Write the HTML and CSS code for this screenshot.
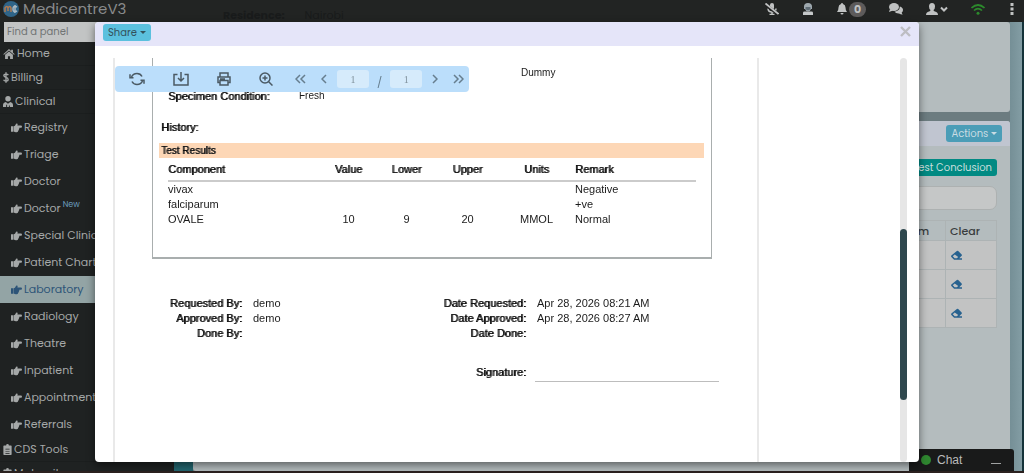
FILE: index.html
```
<!DOCTYPE html>
<html lang="en">
<head>
  <meta charset="UTF-8">
  <meta name="viewport" content="width=device-width, initial-scale=1.0">
  <title>MedicentreV3</title>
  <link rel="stylesheet" href="styles.css">
</head>
<body>
  <!-- Shared icons -->
  <svg class="sprite" aria-hidden="true">
    <symbol id="hand" viewBox="0 0 16 14">
      <path d="M0 4.500h3.400V12.500H0zM4 4.500Q6 4 7 1.500q.500-1.500 2-1 1.300 1 .300 3H14.500q1.500 0 1.500 1.600t-1.500 1.600H12q.600 1.200-.500 2.200.3 1.500-1 2 0 2.100-2 2.100H7q-1.500 0-3-1z"/>
    </symbol>
    <symbol id="clipboard" viewBox="0 0 12 16">
      <path fill-rule="evenodd" d="M1 2h3a2 2 0 0 1 4 0h3a1 1 0 0 1 1 1v12a1 1 0 0 1-1 1H1a1 1 0 0 1-1-1V3a1 1 0 0 1 1-1zM3 7v1h6V7zM3 10v1h6v-1zM3 13v1h6v-1z"/>
    </symbol>
    <symbol id="eraser" viewBox="0 0 18 16">
      <path fill-rule="evenodd" d="M9.500 1.500a1.500 1.500 0 0 1 2 0l5 5a1.500 1.500 0 0 1 0 2L13 12h4v2H5.500L1.500 10a1.500 1.500 0 0 1 0-2zM6.500 6.500L3.500 9.200 6.300 12h3.200L11.500 10z"/>
    </symbol>
  </svg>

  <header class="topbar">
    <div class="brand">
      <svg class="logo" viewBox="0 0 16 16">
        <circle cx="8" cy="8" r="8" fill="#2f6488"/>
        <path d="M2 11V7q2-3 3 0v3M5 7q2-3 3 0v4" fill="none" stroke="#b07a50" stroke-width="1.500"/>
        <path d="M14 6q-4-2-4 2t4 2M12 4v8" fill="none" stroke="#a9b8c2" stroke-width="1.500"/>
      </svg>
      <span>MedicentreV3</span>
    </div>
    <div class="residence"><b>Residence:</b><span>Nairobi</span></div>
    <nav class="tools">
      <button class="tool" aria-label="Microphone off">
        <svg width="14" height="12" viewBox="0 0 14 12"><rect x="5" y="0" width="4" height="7" rx="2" fill="currentColor"/><path d="M3 5.500q0 3.500 4 3.500t4-3.500M7 9v2.500M4.500 11.500h5" fill="none" stroke="currentColor" stroke-width="1.500"/><path d="M0 1.500L13 11" stroke="#222" stroke-width="3"/><path d="M.5.500L13.500 11" stroke="currentColor" stroke-width="1.800"/></svg>
      </button>
      <button class="tool" aria-label="Operator">
        <svg width="12" height="12" viewBox="0 0 12 12"><path d="M2 3.500a4 3.500 0 0 1 8 0V6H9Q8 8.500 6 8.500T3 6H2z" fill="#9ea8ae"/><path d="M3.500 4h5v2Q6 8.500 3.500 6z" fill="#5e6b74"/><path d="M1 12V9.500q0-1 1.500-1h7q1.500 0 1.500 1V12z" fill="#c5c8c9"/></svg>
      </button>
      <button class="tool" aria-label="Notifications">
        <svg width="10" height="12" viewBox="0 0 10 12"><path d="M5 0q1 0 1 1 2.500.7 2.500 3.500 0 3 1.500 4.500H0q1.500-1.500 1.500-4.500Q1.500 1.700 4 1q0-1 1-1zM3.500 10h3a1.500 1.500 0 0 1-3 0z" fill="currentColor"/></svg>
        <span class="badge">0</span>
      </button>
      <button class="tool" aria-label="Messages">
        <svg width="14" height="12" viewBox="0 0 14 12"><ellipse cx="5" cy="4" rx="5" ry="4" fill="currentColor"/><path d="M1 6L0 9l4-1.500z" fill="currentColor"/><path d="M10.800 3.500q0 4.500-5.300 5.200 1.500 2 4.500 1.800 2 1.300 3.700 1-1-1-1-2 1.300-1 1.300-2.500 0-2.500-3.200-3.500z" fill="currentColor"/></svg>
      </button>
      <button class="tool" aria-label="Account">
        <svg width="22" height="12" viewBox="0 0 22 12"><path d="M6 0q3 0 3 3.500Q9 6 7.500 7q0 1.200 1.500 1.500 3 .8 3 3.500H0q0-2.700 3-3.500Q4.500 8.200 4.500 7 3 6 3 3.500 3 0 6 0z" fill="currentColor"/><path d="M15 4.500l3 3 3-3" fill="none" stroke="currentColor" stroke-width="2"/></svg>
      </button>
      <button class="tool online" aria-label="Connection">
        <svg width="14" height="11" viewBox="0 0 14 11"><path d="M.5 4q6.500-6 13 0M3 6.500q4-3.700 8 0" fill="none" stroke="currentColor" stroke-width="1.700"/><circle cx="7" cy="9.200" r="1.500" fill="currentColor"/></svg>
      </button>
      <button class="tool" aria-label="More">
        <svg width="8" height="12" viewBox="-2 0 8 12"><path d="M.5 0h3v3h-3zM.5 4.500h3v3h-3zM.5 9h3v3h-3z" fill="currentColor"/></svg>
      </button>
    </nav>
  </header>

  <div class="layout">
    <aside class="sidebar">
      <input class="search" type="text" placeholder="Find a panel" aria-label="Find a panel">
      <ul class="menu">
        <li><a href="#"><svg width="12" height="10" viewBox="0 0 16 14"><path d="M8 0l3 2.700V1h2.500v4L16 7.200l-1 1L8 2.200l-7 6-1-1zM8 3.500l5.500 4.700V14H9.500v-4h-3v4h-4V8.200z"/></svg>Home</a></li>
        <li><a href="#"><svg width="6" height="11" viewBox="0 0 7 12"><path d="M6.200 3.200Q5.500 2 3.500 2 1 2 1 3.800q0 1.500 2.500 2T6 8.200Q6 10 3.500 10 1.300 10 .7 8.500M3.500 0v12" fill="none" stroke="currentColor" stroke-width="1.600"/></svg>Billing</a></li>
        <li><a href="#"><svg width="10" height="11" viewBox="0 0 11 12"><circle cx="5.500" cy="3" r="3"/><path d="M0 12V9.500Q0 7 3 6.500l2.500 2 2.500-2q3 .5 3 3V12H7.500v-1.500h-1V12h-2V9.500h-1V12z"/></svg>Clinical</a></li>
      </ul>
      <ul class="menu submenu">
        <li><a href="#"><svg><use href="#hand"/></svg>Registry</a></li>
        <li><a href="#"><svg><use href="#hand"/></svg>Triage</a></li>
        <li><a href="#"><svg><use href="#hand"/></svg>Doctor</a></li>
        <li><a href="#"><svg><use href="#hand"/></svg>Doctor <sup>New</sup></a></li>
        <li><a href="#"><svg><use href="#hand"/></svg>Special Clinics</a></li>
        <li><a href="#"><svg><use href="#hand"/></svg>Patient Charts</a></li>
        <li class="active"><a href="#"><svg><use href="#hand"/></svg>Laboratory</a></li>
        <li><a href="#"><svg><use href="#hand"/></svg>Radiology</a></li>
        <li><a href="#"><svg><use href="#hand"/></svg>Theatre</a></li>
        <li><a href="#"><svg><use href="#hand"/></svg>Inpatient</a></li>
        <li><a href="#"><svg><use href="#hand"/></svg>Appointments</a></li>
        <li><a href="#"><svg><use href="#hand"/></svg>Referrals</a></li>
      </ul>
      <ul class="menu">
        <li><a href="#"><svg width="9" height="11"><use href="#clipboard"/></svg>CDS Tools</a></li>
        <li><a href="#"><svg width="9" height="11"><use href="#clipboard"/></svg>Maternity<svg class="arrow" width="8" height="6" viewBox="0 0 8 6"><path d="M1 1l3 3 3-3" fill="none" stroke="currentColor" stroke-width="2"/></svg></a></li>
      </ul>
    </aside>
    <div class="rail"></div>

    <main class="content">
      <section class="card details"></section>
      <section class="card results">
        <div class="card-head"><button class="btn btn-info">Actions <i class="caret"></i></button></div>
        <div class="card-body">
          <button class="btn btn-teal">Test Conclusion</button>
          <input class="filter" type="text" aria-label="Filter tests">
          <table class="tests">
            <thead><tr><th>Specimen Item</th><th>Clear</th></tr></thead>
            <tbody>
              <tr><td></td><td><a href="#" aria-label="Clear"><svg width="13" height="11"><use href="#eraser"/></svg></a></td></tr>
              <tr><td></td><td><a href="#" aria-label="Clear"><svg width="13" height="11"><use href="#eraser"/></svg></a></td></tr>
              <tr><td></td><td><a href="#" aria-label="Clear"><svg width="13" height="11"><use href="#eraser"/></svg></a></td></tr>
            </tbody>
          </table>
        </div>
      </section>
    </main>
  </div>

  <div class="chat"><i class="dot"></i><span>Chat</span><button class="minimise" aria-label="Minimise"></button></div>

  <!-- Report preview -->
  <div class="modal" role="dialog" aria-label="Report preview">
    <div class="modal-head">
      <button class="btn btn-share">Share <i class="caret"></i></button>
      <button class="close" aria-label="Close"><svg width="11" height="11" viewBox="0 0 11 11"><path d="M1 1l9 9M10 1L1 10" stroke="currentColor" stroke-width="2.400"/></svg></button>
    </div>
    <div class="viewer">
      <div class="page">
        <div class="report">
          <p class="patient">Dummy</p>
          <dl class="specimen">
            <dt>Specimen Condition:</dt>
            <dd>Fresh</dd>
          </dl>
          <p class="history">History:</p>
          <h3>Test Results</h3>
          <table class="values">
            <colgroup><col><col class="value"><col class="limit"><col class="limit"><col class="unit"><col class="remark"></colgroup>
            <thead>
              <tr><th>Component</th><th>Value</th><th>Lower</th><th>Upper</th><th>Units</th><th>Remark</th></tr>
            </thead>
            <tbody>
              <tr><td>vivax</td><td></td><td></td><td></td><td></td><td>Negative</td></tr>
              <tr><td>falciparum</td><td></td><td></td><td></td><td></td><td>+ve</td></tr>
              <tr><td>OVALE</td><td>10</td><td>9</td><td>20</td><td>MMOL</td><td>Normal</td></tr>
            </tbody>
          </table>
        </div>
        <div class="signoff">
          <dl>
            <dt>Requested By:</dt><dd>demo</dd>
            <dt>Approved By:</dt><dd>demo</dd>
            <dt>Done By:</dt><dd></dd>
          </dl>
          <dl class="dates">
            <dt>Date Requested:</dt><dd>Apr 28, 2026 08:21 AM</dd>
            <dt>Date Approved:</dt><dd>Apr 28, 2026 08:27 AM</dd>
            <dt>Date Done:</dt><dd></dd>
            <dt class="sign">Signature:</dt><dd class="sign line"></dd>
          </dl>
        </div>
      </div>
      <div class="scrollbar"><div class="thumb"></div></div>

      <div class="toolbar">
        <div class="actions">
          <button aria-label="Refresh"><svg width="16" height="14" viewBox="0 0 16 14"><path d="M2.500 5Q4 1.500 8 1.500q3.500 0 5 3M13.500 9Q12 12.500 8 12.500q-3.500 0-5-3"/><path d="M1 2.200v3.500h3.500M15 11.800V8.300h-3.500"/></svg></button>
          <button aria-label="Download"><svg width="16" height="14" viewBox="0 0 16 14"><path d="M4.500 2.500H1V13h14V2.500h-3.500M8 0v8.500M5 6l3 3 3-3"/></svg></button>
          <button aria-label="Print"><svg width="14" height="14" viewBox="0 0 14 14"><path d="M3 5V1h8v4M3 10.500H1V5h12v5.500h-2M3 8.500h8V13H3zM3 7h5"/></svg></button>
          <button aria-label="Zoom in"><svg width="14" height="14" viewBox="0 0 14 14"><circle cx="6" cy="6" r="5"/><path d="M9.700 9.700L13.500 13.500M3.500 6h5M6 3.500v5"/></svg></button>
        </div>
        <div class="pager">
          <div class="step">
            <button aria-label="First page"><svg width="11" height="10" viewBox="0 0 11 10"><path d="M5 1L1 5l4 4M10 1L6 5l4 4"/></svg></button>
            <button aria-label="Previous page"><svg width="6" height="10" viewBox="0 0 6 10"><path d="M5 1L1 5l4 4"/></svg></button>
          </div>
          <input type="text" value="1" aria-label="Page">
          <span>/</span>
          <input type="text" value="1" aria-label="Page count" readonly>
          <div class="step">
            <button aria-label="Next page"><svg width="6" height="10" viewBox="0 0 6 10"><path d="M1 1l4 4-4 4"/></svg></button>
            <button aria-label="Last page"><svg width="11" height="10" viewBox="0 0 11 10"><path d="M1 1l4 4-4 4M6 1l4 4-4 4"/></svg></button>
          </div>
        </div>
      </div>
    </div>
  </div>
</body>
</html>
```
FILE: styles.css
```
* {
  box-sizing: border-box;
}

body {
  margin: 0;
  height: 100vh;
  display: flex;
  flex-direction: column;
  overflow: hidden;
  background: #81999f;
  color: #222;
  font-family: Poppins, Lato, sans-serif;
  font-size: 11px;
  border-bottom: 2px solid #2b211f;
}

button,
input {
  font: inherit;
}

button {
  padding: 0;
  border: 0;
  background: none;
  color: inherit;
}

ul, dl, p, h3 {
  margin: 0;
  padding: 0;
}

.sprite {
  display: none;
}

/* Top bar */
.topbar {
  flex: none;
  height: 22px;
  display: flex;
  align-items: center;
  padding: 0 8px 4px 3px;
  background: #222423;
}

.brand {
  width: 220px;
  display: flex;
  align-items: center;
  gap: 4px;
  color: #898b8c;
  font-size: 15px;
  line-height: 18px;
}

.logo {
  width: 16px;
  height: 16px;
}

.residence {
  align-self: flex-end;
  display: flex;
  gap: 20px;
  margin-bottom: -4px;
  color: #191b1b;
  line-height: 14px;
}

.tools {
  display: flex;
  align-items: center;
  gap: 23px;
  margin-left: auto;
}

.tool {
  display: flex;
  align-items: center;
  color: #c0c2c2;
}

.online {
  color: #2c8a2c;
}

.badge {
  width: 17px;
  height: 15px;
  margin-left: 2px;
  border-radius: 8px;
  background: #5d5b5b;
  line-height: 15px;
  font-weight: bold;
}

.layout {
  flex: 1;
  min-height: 0;
  display: flex;
}

/* Sidebar */
.sidebar {
  flex: none;
  width: 174px;
  overflow: hidden;
  background: #1f2222;
}

.search {
  display: block;
  width: 166px;
  height: 20px;
  margin-left: 4px;
  padding: 0 3px;
  border: 0;
  background: #c2c4c4;
  font-size: 10px;
}

.search::placeholder {
  color: #717575;
}

.menu {
  list-style: none;
}

.menu a {
  height: 24px;
  display: flex;
  align-items: center;
  gap: 2px;
  padding-left: 3px;
  border-bottom: 1px solid #1b1e1e;
  color: #a5a8a8;
  text-decoration: none;
  white-space: nowrap;
}

.menu svg {
  flex: none;
  fill: currentColor;
}

.submenu a {
  height: 27px;
  padding-left: 11px;
  border: 0;
}

.submenu svg {
  width: 11px;
  height: 10px;
}

.submenu sup {
  align-self: flex-start;
  margin-top: 5px;
  color: #6b9cbd;
  font-size: 8px;
  line-height: 10px;
}

.submenu .active {
  background: #93a4a5;
}

.submenu .active a {
  color: #2d5478;
}

.menu .arrow {
  margin: 0 15px 0 auto;
}

.rail {
  flex: none;
  width: 19px;
  background: #23666f;
}

/* Main content behind the report */
.content {
  flex: 1;
  display: flex;
  flex-direction: column;
  gap: 9px;
  padding-right: 14px;
  background: linear-gradient(to left, #15333a 2px, #839da4 2px, #758f96 14px, #6c7c80 14px);
}

.card {
  background: #b4bcbe;
  border-radius: 3px;
}

.details {
  flex: none;
  height: 90px;
}

.results {
  flex: 1;
}

.card-head {
  display: flex;
  justify-content: flex-end;
  padding: 4px 8px;
  background: #c0c5d0;
  border-radius: 3px 3px 0 0;
}

.card-body {
  display: flex;
  flex-direction: column;
  align-items: flex-end;
  gap: 10px;
  padding: 13px 13px 0;
}

.btn {
  height: 17px;
  padding: 0 5px;
  border-radius: 3px;
  font-size: 10px;
  line-height: 17px;
}

.btn-info {
  background: #4b9db7;
  color: #c9dce3;
}

.btn-teal {
  background: #018a83;
  color: #c9dfde;
}

.btn-share {
  background: #5bc0de;
  color: #33525c;
}

.caret {
  display: inline-block;
  border: 3px solid transparent;
  border-top-color: currentColor;
  border-bottom: 0;
  vertical-align: 2px;
}

.filter {
  width: 100%;
  height: 24px;
  border: 1px solid #adb1b1;
  border-radius: 7px;
  background: #c5c7c7;
}

.tests {
  width: 100%;
  border-collapse: collapse;
}

.tests th,
.tests td {
  height: 29px;
  padding: 0 16px 0 4px;
  border: 1px solid #adb3b4;
  text-align: right;
}

.tests th {
  height: 20px;
  color: #393d3e;
  font-weight: 500;
  line-height: 18px;
}

.tests th:last-child,
.tests td:last-child {
  width: 50px;
  text-align: left;
}

.tests td {
  background: #c2c3c3;
}

.tests svg {
  display: block;
  fill: #28628f;
}

/* Chat */
.chat {
  position: fixed;
  right: 10px;
  bottom: 2px;
  width: 105px;
  height: 22px;
  display: flex;
  align-items: center;
  gap: 6px;
  padding: 0 13px 0 12px;
  border-radius: 3px 3px 0 0;
  background: #191a1a;
  color: #b9bbbb;
  font-family: "Liberation Sans", sans-serif;
  font-size: 12px;
}

.dot {
  width: 10px;
  height: 10px;
  border-radius: 50%;
  background: #2f8730;
}

.minimise {
  width: 10px;
  height: 1px;
  margin: 6px 0 0 auto;
  background: #a0a2a2;
}

/* Report dialog */
.modal {
  position: fixed;
  inset: 22px 105px 11px 95px;
  display: flex;
  flex-direction: column;
  overflow: hidden;
  border-radius: 4px;
  background: #fff;
  box-shadow: 0 3px 9px rgba(0, 0, 0, 0.5);
}

.modal-head {
  flex: none;
  height: 24px;
  display: flex;
  align-items: flex-start;
  justify-content: space-between;
  padding: 2px 8px;
  background: #e5e5f9;
}

.close {
  margin-top: 2px;
  color: #bdbdc2;
}

.close svg {
  display: block;
}

.viewer {
  flex: 1;
  min-height: 0;
  display: flex;
  justify-content: space-between;
  position: relative;
  padding: 12px 12px 0 18px;
}

.page {
  width: 646px;
  border: solid #e9e9e9;
  border-width: 0 2px;
  color: #1b1b1b;
  font-family: "Liberation Sans", sans-serif;
  font-size: 11px;
  line-height: 15px;
}

.report {
  height: 201px;
  margin: 0 45px 0 37px;
  padding: 0 7px 0 6px;
  border: solid #a9aeae;
  border-width: 0 1px 2px;
}

.patient {
  padding: 7px 0 0 362px;
  font-size: 10px;
  line-height: 15px;
}

.specimen {
  display: flex;
  padding: 9px 0 0 9px;
}

.specimen dt {
  width: 131px;
}

.specimen dd {
  font-size: 10px;
  line-height: 14px;
}

/* Labels are the regular face, doubled */
.page dt,
.page th,
.history,
.report h3 {
  color: #111;
  font-weight: normal;
  text-shadow: 1px 0 #444;
}

dd {
  margin: 0;
}

.history {
  padding: 16px 0 8px 2px;
}

.report h3 {
  padding-left: 2px;
  background: #fdd7b6;
  font-size: 10px;
  line-height: 15px;
}

.values {
  width: calc(100% - 17px);
  margin: 4px 8px 0 9px;
  table-layout: fixed;
  border-collapse: collapse;
}

.values th,
.values td {
  padding: 0;
  height: 15px;
  text-align: center;
}

.values th {
  padding-bottom: 3px;
  border-bottom: 2px solid #cbcbcb;
}

.values th:first-child,
.values th:last-child,
.values td:first-child,
.values td:last-child {
  text-align: left;
}

.value {
  width: 55px;
}

.limit {
  width: 61px;
}

.unit {
  width: 77px;
}

.remark {
  width: 121px;
}

.signoff {
  display: flex;
  justify-content: space-between;
  margin: 37px 38px 0 54px;
}

.signoff dl {
  display: grid;
  grid-template-columns: 73px auto;
  grid-auto-rows: 15px;
  gap: 0 9px;
  align-self: start;
}

.signoff .dates {
  grid-template-columns: 90px 184px;
  grid-template-rows: 15px 15px 15px 41px;
}

.signoff dt {
  text-align: right;
  white-space: nowrap;
}

.signoff dd {
  padding-left: 2px;
}

.signoff .sign {
  padding-top: 24px;
}

.line {
  border-bottom: 1px solid #bdbdbd;
}

.scrollbar {
  width: 7px;
  padding-top: 171px;
  border-radius: 4px;
  background: #e6e6e6;
}

.thumb {
  height: 171px;
  border-radius: 4px;
  background: #2f484e;
}

/* Floating viewer toolbar */
.toolbar {
  position: absolute;
  top: 20px;
  left: 20px;
  width: 354px;
  height: 26px;
  display: flex;
  align-items: center;
  gap: 22px;
  padding-left: 14px;
  border-radius: 4px;
  background: #bbdefb;
  color: #4b5a64;
}

.toolbar svg {
  display: block;
  fill: none;
  stroke: currentColor;
  stroke-width: 1.5;
}

.actions {
  display: flex;
  gap: 28px;
}

.pager {
  display: flex;
  align-items: center;
  gap: 10px;
  color: #667e8e;
}

.step {
  display: flex;
  gap: 15px;
}

.pager input {
  width: 32px;
  height: 18px;
  padding: 0;
  border: 0;
  border-radius: 3px;
  background: #d6ebfb;
  color: #80919c;
  font-family: "Liberation Serif", serif;
  font-size: 10px;
  text-align: center;
}

.pager span {
  margin: 6px -2px 0;
}
```
